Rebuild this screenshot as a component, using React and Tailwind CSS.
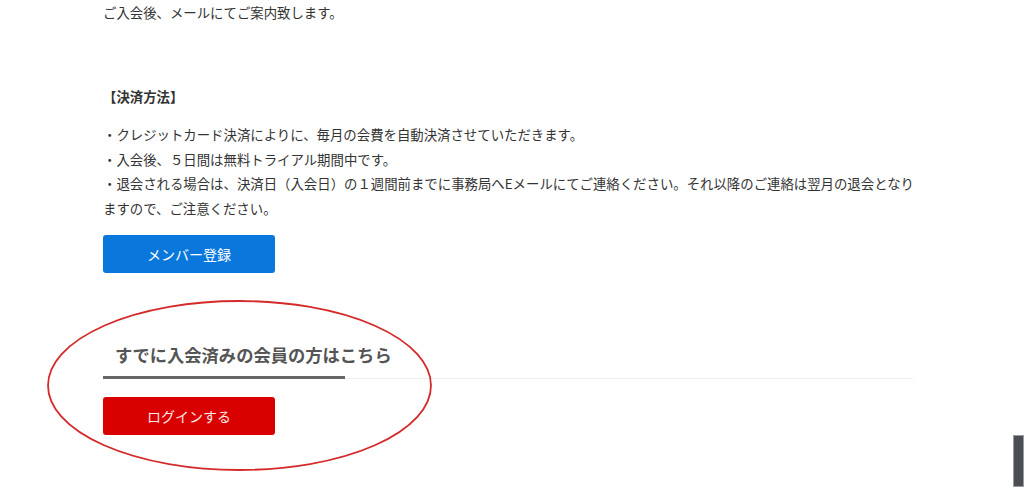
export default function App() {
  const font = { fontFamily: '"Noto Sans CJK JP", "Noto Sans", sans-serif' };
  return (
    <div className="relative h-[487px] w-[1024px] overflow-hidden bg-white text-[#333]" style={font}>
      <div className="w-[913px] pl-[103px]">
        <p className="whitespace-nowrap text-[13.4px] leading-[24px]">ご入会後、メールにてご案内致します。</p>

        <p className="mt-[60px] whitespace-nowrap text-[13.4px] font-bold leading-[24px]">【決済方法】</p>

        <div className="mt-[14px] whitespace-nowrap text-[13.4px] leading-[24.5px]">
          <p>・クレジットカード決済によりに、毎月の会費を自動決済させていただきます。</p>
          <p>・入会後、５日間は無料トライアル期間中です。</p>
          <p>・退会される場合は、決済日（入会日）の１週間前までに事務局へEメールにてご連絡ください。それ以降のご連絡は翌月の退会となり</p>
          <p>ますので、ご注意ください。</p>
        </div>

        <button className="mt-[15px] flex h-[38px] w-[172px] items-center justify-center rounded-[3px] bg-[#0a77dc] text-[14px] text-white">
          メンバー登録
        </button>

        <h3 className="mt-[69px] whitespace-nowrap pl-[12px] text-[17.3px] font-bold leading-[26px] text-[#555]">
          すでに入会済みの会員の方はこちら
        </h3>
        <div className="mt-[8px] flex items-end">
          <div className="h-[3px] w-[242px] bg-[#666]" />
          <div className="h-px flex-1 bg-[#eeeeee]" />
        </div>

        <button className="mt-[18px] flex h-[38px] w-[172px] items-center justify-center rounded-[3px] bg-[#d90000] text-[14px] text-[#fbeaea]">
          ログインする
        </button>
      </div>

      <svg className="pointer-events-none absolute left-0 top-0" width="1024" height="487">
        <ellipse cx="239.5" cy="385.5" rx="191.5" ry="84.5" fill="none" stroke="#d52a2a" strokeWidth="1.8" />
      </svg>

      <div className="absolute bottom-0 right-0 h-[52px] w-[11px] border border-[#9a9ca0] bg-[#4b4e52]" />
    </div>
  );
}
